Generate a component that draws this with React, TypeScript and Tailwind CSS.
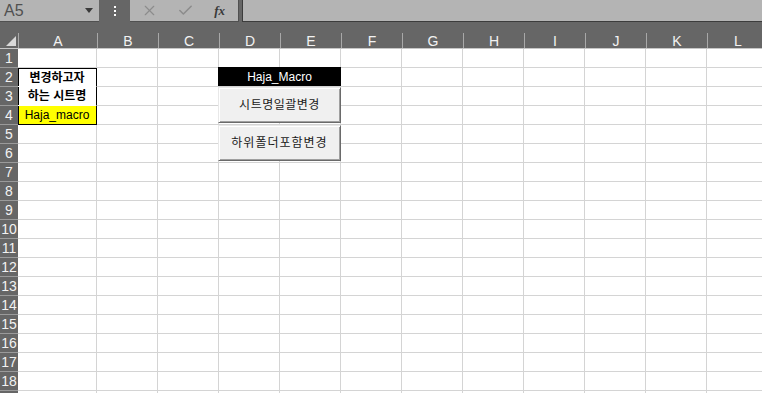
import { X, Check } from "lucide-react";

const cols = ["A", "B", "C", "D", "E", "F", "G", "H", "I", "J", "K", "L"];
const rows = Array.from({ length: 19 }, (_, i) => i + 1);

const font = "font-['Liberation_Sans','Noto_Sans_CJK_KR',sans-serif]";

function colWidth(c: string) {
  return c === "A" ? "w-[79px]" : "w-[61px]";
}

function CellA({ row }: { row: number }) {
  if (row === 2 || row === 3) {
    return (
      <div
        className={`w-[79px] shrink-0 h-full flex items-center justify-center bg-white border-r border-black shadow-[inset_1px_0_0_#000] text-[12px] font-bold text-black ${
          row === 2 ? "border-t border-t-black border-b border-b-white" : "border-b border-b-white"
        }`}
      >
        {row === 2 ? "변경하고자" : "하는 시트명"}
      </div>
    );
  }
  if (row === 4) {
    return (
      <div className="w-[79px] shrink-0 h-full flex items-center justify-center bg-[#ffff00] border-r border-b border-black shadow-[inset_1px_0_0_#000] text-[12px] text-black">
        Haja_macro
      </div>
    );
  }
  return <div className="w-[79px] shrink-0 h-full border-r border-b border-[#d4d4d4]" />;
}

export default function App() {
  return (
    <div className={`w-[762px] h-[393px] overflow-hidden bg-white ${font}`}>
      {/* formula bar */}
      <div className="h-[22px] bg-[#666666] flex">
        <div className="w-[99px] shrink-0 bg-[#b4b4b4] border-b border-[#505050] flex items-center justify-between pl-[4px] pr-[6px]">
          <span className="text-[16px] text-[#505050] leading-none">A5</span>
          <svg width="8" height="5" viewBox="0 0 8 5">
            <path d="M0 0h8L4 5z" fill="#3a3a3a" />
          </svg>
        </div>
        <div className="w-[31px] shrink-0 flex flex-col items-center justify-center gap-[2px]">
          <span className="w-[2px] h-[2px] bg-white" />
          <span className="w-[2px] h-[2px] bg-white" />
          <span className="w-[2px] h-[2px] bg-white" />
        </div>
        <div className="w-[109px] shrink-0 bg-[#b4b4b4] border-b border-r border-[#505050] flex items-center">
          <div className="w-[40px] flex justify-center">
            <X size={17} strokeWidth={1.6} color="#8c8c8c" />
          </div>
          <div className="w-[32px] flex justify-center">
            <Check size={17} strokeWidth={2.2} color="#8c8c8c" />
          </div>
          <div className="w-[37px] flex justify-center">
            <span className="font-['Liberation_Serif',serif] italic font-bold text-[13px] text-[#3a3a3a]">fx</span>
          </div>
        </div>
        <div className="w-[3px] shrink-0" />
        <div className="flex-1 bg-[#b4b4b4] border-l border-b border-[#3c3c3c]" />
      </div>

      {/* column headers */}
      <div className="h-[27px] bg-[#666666] border-b border-[#c6c6c6] flex items-end">
        <div className="w-[18px] h-[15px] shrink-0 relative">
          <svg className="absolute left-[6px] top-[3px]" width="10" height="10" viewBox="0 0 10 10">
            <path d="M10 0V10H0z" fill="#d9d9d9" />
          </svg>
        </div>
        {cols.map((c) => (
          <div
            key={c}
            className={`${colWidth(c)} shrink-0 h-[15px] border-l border-[#a8a8a8] flex items-center justify-center text-[14px] leading-none text-[#f2f2f2] first:border-l-0`}
          >
            {c}
          </div>
        ))}
      </div>

      {/* grid */}
      <div className="relative">
        {rows.map((r) => (
          <div key={r} className="h-[19px] flex">
            <div className="w-[18px] shrink-0 h-full bg-[#666666] border-b border-[#9a9a9a] flex items-center justify-center text-[14px] leading-none text-[#f2f2f2]">
              {r < 19 ? r : ""}
            </div>
            <CellA row={r} />
            {cols.slice(1).map((c) => (
              <div key={c} className={`${colWidth(c)} shrink-0 h-full border-r border-b border-[#d4d4d4]`} />
            ))}
          </div>
        ))}

        {/* sheet objects */}
        <div className="absolute left-[218px] top-[18px] w-[123px] h-[19px] bg-black text-white text-[12px] flex items-center justify-center">
          Haja_Macro
        </div>
        <button className="absolute left-[218px] top-[38px] w-[123px] h-[36px] bg-[#f0f0f0] border border-t-[#e8e8e8] border-l-[#e8e8e8] border-r-[#6a6a6a] border-b-[#6a6a6a] shadow-[inset_1px_1px_0_#fff,inset_-1px_-1px_0_#a0a0a0] text-[12px] text-[#1a1a1a] tracking-[0.5px] flex items-center justify-center">
          시트명일괄변경
        </button>
        <button className="absolute left-[218px] top-[76px] w-[123px] h-[36px] bg-[#f0f0f0] border border-t-[#e8e8e8] border-l-[#e8e8e8] border-r-[#6a6a6a] border-b-[#6a6a6a] shadow-[inset_1px_1px_0_#fff,inset_-1px_-1px_0_#a0a0a0] text-[12px] text-[#1a1a1a] tracking-[1px] flex items-center justify-center">
          하위폴더포함변경
        </button>
      </div>
    </div>
  );
}
